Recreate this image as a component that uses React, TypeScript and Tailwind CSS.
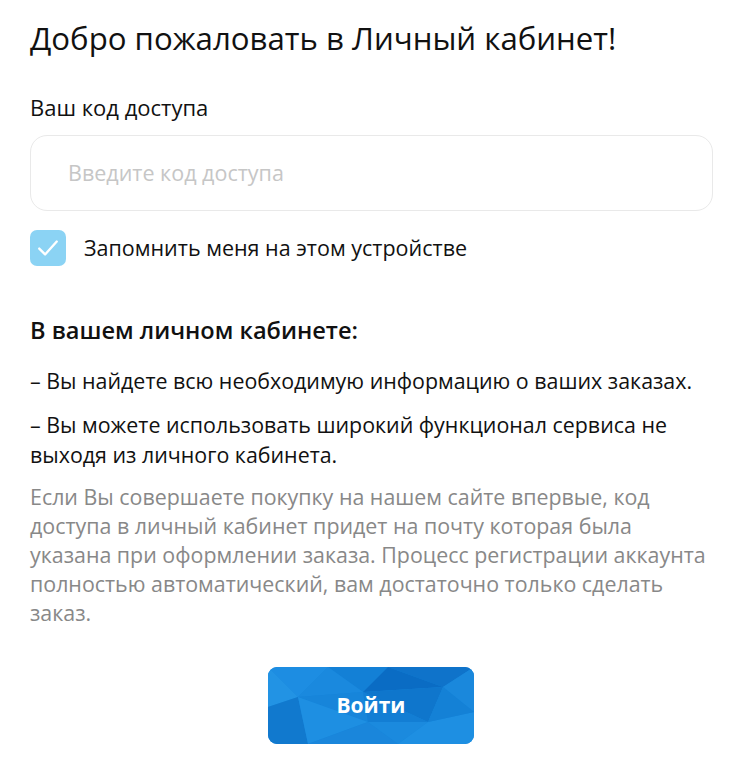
export default function App() {
  return (
    <div className="min-h-[762px] w-[737px] bg-white px-[30px] pt-[18px] font-['Open_Sans',sans-serif] text-[#111]">
      <h1 className="text-[31.2px] leading-[40px] font-medium">Добро пожаловать в Личный кабинет!</h1>

      <label className="mt-[36px] block text-[22px] leading-[26px] font-medium">Ваш код доступа</label>
      <div className="mt-[15px] flex h-[76px] w-[683px] items-center rounded-[17px] border border-[#e9e9e9] px-[37px]">
        <input
          placeholder="Введите код доступа"
          className="w-full bg-transparent text-[21.5px] outline-none placeholder:text-[#c6c6c6]"
        />
      </div>

      <div className="mt-[19px] flex h-[36px] items-center gap-[18px]">
        <div className="flex h-[36px] w-[36px] items-center justify-center rounded-[7px] bg-[#8bd3f4]">
          <svg viewBox="0 0 24 24" className="h-[28px] w-[28px]" fill="none" stroke="white" strokeWidth="2" strokeLinecap="round" strokeLinejoin="round">
            <path d="M4.5 12.5l5 5 10-11" />
          </svg>
        </div>
        <span className="text-[21.5px] leading-[28px]">Запомнить меня на этом устройстве</span>
      </div>

      <h2 className="mt-[49px] text-[23.6px] leading-[30px] font-semibold">В вашем личном кабинете:</h2>
      <p className="mt-[21px] text-[21.4px] leading-[30px]">– Вы найдете всю необходимую информацию о ваших заказах.</p>
      <p className="mt-[14px] text-[21.4px] leading-[30px]">
        – Вы можете использовать широкий функционал сервиса не выходя из личного кабинета.
      </p>
      <p className="mt-[12px] text-[21.4px] leading-[29px] text-[#888]">
        Если Вы совершаете покупку на нашем сайте впервые, код доступа в личный кабинет придет на почту которая была
        указана при оформлении заказа. Процесс регистрации аккаунта полностью автоматический, вам достаточно только
        сделать заказ.
      </p>

      <div className="mt-[40px] flex justify-center pl-[5px]">
        <button className="relative flex h-[77px] w-[206px] items-center justify-center overflow-hidden rounded-[9px] bg-[#1685da]">
          <svg className="absolute inset-0 h-full w-full" viewBox="0 0 206 77" preserveAspectRatio="none">
            <polygon points="0,0 60,0 30,30" fill="#1d8de2" />
            <polygon points="60,0 120,0 95,25" fill="#1380d6" />
            <polygon points="120,0 206,0 175,20" fill="#0f73ca" />
            <polygon points="95,25 120,0 175,20" fill="#0a6cc4" />
            <polygon points="175,20 206,0 206,45" fill="#1a88dc" />
            <polygon points="0,0 30,30 0,40" fill="#2293e4" />
            <polygon points="30,30 60,0 95,25" fill="#1a89de" />
            <polygon points="0,40 30,30 40,77 0,77" fill="#1179ce" />
            <polygon points="30,30 95,25 100,55" fill="#1785da" />
            <polygon points="30,30 100,55 40,77" fill="#1e8fe2" />
            <polygon points="40,77 100,55 130,77" fill="#1a86db" />
            <polygon points="95,25 175,20 160,55" fill="#0f76cc" />
            <polygon points="100,55 95,25 160,55" fill="#137ed4" />
            <polygon points="100,55 160,55 130,77" fill="#1b8ade" />
            <polygon points="160,55 206,45 206,77 130,77" fill="#1e8fe2" />
            <polygon points="175,20 206,45 160,55" fill="#1481d6" />
          </svg>
          <span className="relative text-[21px] font-bold text-white">Войти</span>
        </button>
      </div>
    </div>
  )
}
